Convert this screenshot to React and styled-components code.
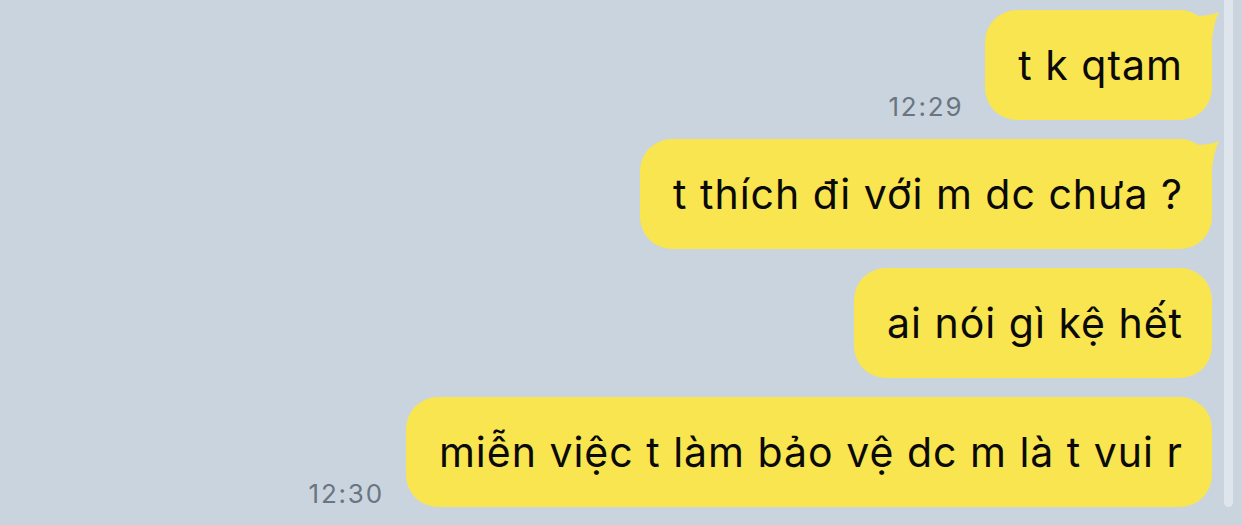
import React from "react";
import styled, { createGlobalStyle } from "styled-components";

const GlobalStyle = createGlobalStyle`
  html, body {
    margin: 0;
    padding: 0;
    background: #c9d4df;
  }
  body {
    font-family: "Inter", "Liberation Sans", sans-serif;
  }
`;

const Screen = styled.div`
  width: 1242px;
  height: 525px;
  display: flex;
  background: #c9d4df;
  overflow: hidden;
`;

const Chat = styled.div`
  flex: 1;
  display: flex;
  flex-direction: column;
  align-items: flex-end;
  gap: 19px;
  padding: 10px 12px 0 0;
`;

const ScrollTrack = styled.div`
  width: 9px;
  height: 507px;
  margin-right: 9px;
  background: #dfe5ec;
  border-radius: 0 0 5px 5px;
`;

const Row = styled.div`
  display: flex;
  align-items: flex-end;
  gap: 22px;
`;

const Time = styled.span`
  font-family: "Inter", "Liberation Sans", sans-serif;
  font-size: 26px;
  color: #6b7581;
  letter-spacing: 1.8px;
  line-height: 26px;
`;

const Bubble = styled.div`
  position: relative;
  height: 110px;
  box-sizing: border-box;
  display: flex;
  align-items: center;
  padding: 0 29px 0 33px;
  background: #f9e54f;
  border-radius: 32px;
  font-size: 41px;
  letter-spacing: 1px;
  color: #0a0a0a;
  white-space: nowrap;
`;

const Tail = styled.svg`
  position: absolute;
  top: 0;
  right: -8px;
  width: 40px;
  height: 40px;
`;

const messages = [
  { text: "t k qtam", time: "12:29", tail: true },
  { text: "t thích đi với m dc chưa ?", tail: true },
  { text: "ai nói gì kệ hết" },
  { text: "miễn việc t làm bảo vệ dc m là t vui r", time: "12:30" },
];

export default function App() {
  return (
    <Screen>
      <GlobalStyle />
      <Chat>
        {messages.map((m, i) => (
          <Row key={i}>
            {m.time && <Time>{m.time}</Time>}
            <Bubble>
              {m.text}
              {m.tail && (
                <Tail viewBox="0 0 40 40">
                  <path
                    d="M16 6 Q30 6 39 2 Q34 12 32 30 L32 40 L16 40 Z"
                    fill="#f9e54f"
                  />
                </Tail>
              )}
            </Bubble>
          </Row>
        ))}
      </Chat>
      <ScrollTrack />
    </Screen>
  );
}
